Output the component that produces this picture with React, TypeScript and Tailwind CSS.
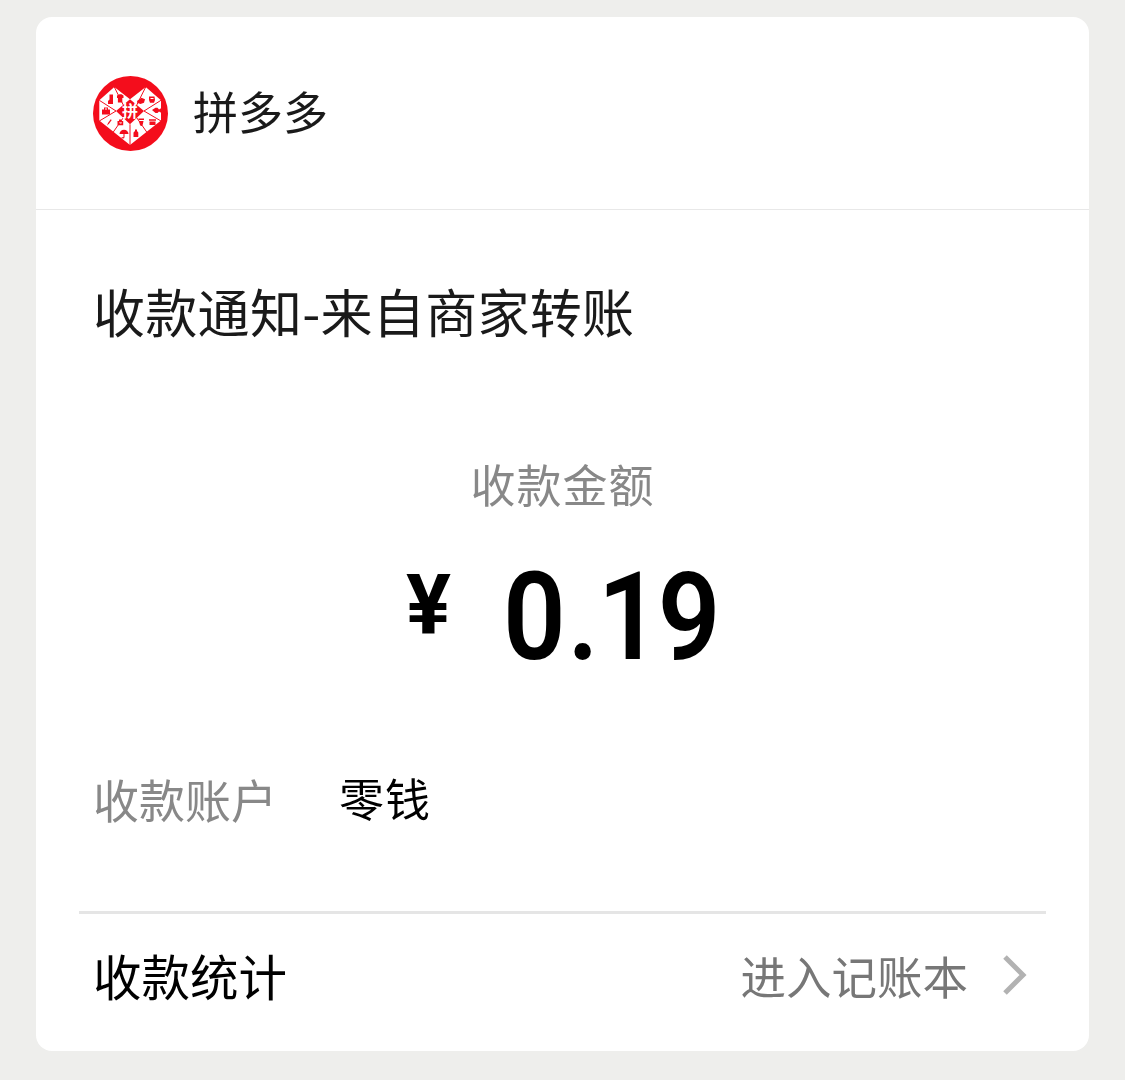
import React from "react";

const cjk = "font-['Noto_Sans_CJK_SC','Noto_Sans',sans-serif]";

const PddLogo = () => (
  <svg viewBox="0 0 75 75" className="w-[75px] h-[75px] shrink-0">
    <circle cx="37.5" cy="37.5" r="37.5" fill="#f40d1c" />
    <path d="M21.3 11 L37 23.3 L52.7 11 L68 24.3 L68 44.5 L37 69 L6.3 44.5 L6.3 24.3 Z" fill="#fff" />
    <g stroke="#f40d1c" strokeWidth="1" fill="none">
      <path d="M21.3 11 L30.3 29" />
      <path d="M52.7 11 L43.7 29" />
      <path d="M6.3 24.3 L23 35 L6.3 45" />
      <path d="M68 24.3 L51 35 L68 45" />
      <path d="M20.3 56 L30.3 41.7" />
      <path d="M53.7 56 L43.7 41.7" />
      <path d="M37 69 L37 48.3" />
    </g>
    <path d="M37 23.3 L51 35 L37 48.3 L23 35 Z" fill="#f40d1c" />
    <text x="37" y="41" textAnchor="middle" fontSize="16" fontWeight="700" fill="#fff" fontFamily="'Noto Sans CJK SC', sans-serif">拼</text>
    <g fill="#f40d1c">
      {/* boot */}
      <path d="M16.5 18.5 h3.5 v5 l-0 4.5 h-5 v-3 l1.5 -1.5 z" />
      {/* shirt */}
      <path d="M24 19.5 l2.5 -1.2 h2 l2 1.2 v2.5 h-1.2 v4.5 h-4.4 v-4.5 h-0.9 z" />
      {/* bag */}
      <path d="M9 33.5 h8 v5 h-8 z M11 33.5 v-2 h4 v2 h-1 v-1 h-2 v1 z" />
      {/* brush */}
      <path d="M14 49.5 l1 -2.5 l2.7 -3.7 l1 0.7 l-2.7 3.7 z" />
      {/* camera bag */}
      <path fillRule="evenodd" d="M24.5 45 h1.5 v-1.5 h2.5 v1.5 h1.7 v4.2 h-5.7 z M26 46 h2.5 v1.5 h-2.5 z" />
      {/* umbrella */}
      <path d="M26.5 58 a4.5 4.3 0 0 1 9 0 z" />
      <path d="M30.5 58 h1 v3 a1.5 1.5 0 0 1 -3 0 h0.8 a0.7 0.7 0 0 0 1.2 0 z" />
      {/* bottle */}
      <path d="M42 53.5 h2 v1.5 l1.3 1.5 v4.5 h-4.8 v-4.5 l1.5 -1.5 z" />
      {/* cup */}
      <path fillRule="evenodd" d="M45.5 42.5 h5.5 v1.5 h-5.5 z M46 45 h4.5 l-0.7 3.5 l-1 1.5 h-1 l-1 -1.5 z" />
      {/* box */}
      <path d="M56 43.3 h7 v1.4 h-7 z M56.5 45.5 h6 v3.5 h-6 z" />
      {/* fish */}
      <path d="M59 34 l3.5 -2.2 h2 l1.5 1.7 l2.5 -1.5 v5 l-2.5 -1.5 l-1.5 1.5 h-2 z" />
      {/* mug */}
      <path fillRule="evenodd" d="M56 20.5 h5.5 l0.5 3.5 l-1 2.7 h-4 l-1 -2.7 z M57.5 22 h3 v1 h-3 z" />
      {/* tag */}
      <path d="M44 25 l4.5 -3.3 l3.5 1.5 l-1 3.5 l-3.5 1.3 l-3 -1 z" />
    </g>
  </svg>
);

const App = () => {
  return (
    <div className={`h-[1080px] w-[1125px] bg-[#eeeeec] px-[36px] pt-[17px] ${cjk}`}>
      <div className="w-[1053px] h-[1034px] bg-white rounded-[16px] flex flex-col transform-gpu">
        <div className="h-[193px] border-b border-[#e8e8e8] flex items-center pl-[57px] gap-[25px]">
          <PddLogo />
          <span className="text-[45px] leading-none text-[#1a1a1a] -mt-[5px]">拼多多</span>
        </div>

        <div className="pl-[57px] pt-[71px] text-[52px] leading-[60px] text-[#1a1a1a] tracking-[0.3px]">
          收款通知-来自商家转账
        </div>

        <div className="mt-[113px] text-center text-[45px] leading-[60px] text-[#888888] tracking-[1px]">收款金额</div>

        <div className="mt-[44px] h-[120px] flex items-center justify-center font-['Roboto',sans-serif] text-black">
          <span className="text-[84px] font-bold leading-none mr-[52px] -mt-[25px]">¥</span>
          <span className="w-[216px] text-[122px] font-semibold leading-none whitespace-nowrap origin-left scale-x-[0.9] tracking-[-3px]">
            0<span className="ml-[5px] mr-[2px]">.</span>19
          </span>
        </div>

        <div className="mt-[90px] pl-[57px] flex items-center leading-[60px]">
          <span className="w-[246px] text-[46px] text-[#888888]">收款账户</span>
          <span className="text-[45px] tracking-[1px] text-black">零钱</span>
        </div>

        <div className="mt-[83px] mx-[43px] h-[3px] bg-[#e5e5e5]" />

        <div className="flex-1 pl-[57px] pr-[62px] pb-[14px] flex items-center justify-between">
          <span className="text-[48.5px] leading-none text-black">收款统计</span>
          <div className="flex items-center gap-[35px]">
            <span className="text-[45.5px] leading-none text-[#777777]">进入记账本</span>
            <svg viewBox="0 0 24 40" className="w-[24px] h-[40px] -mt-[2px]" fill="none" stroke="#b2b2b2" strokeWidth="5">
              <path d="M2 2 L20 20 L2 38" />
            </svg>
          </div>
        </div>
      </div>
    </div>
  );
};

export default App;
